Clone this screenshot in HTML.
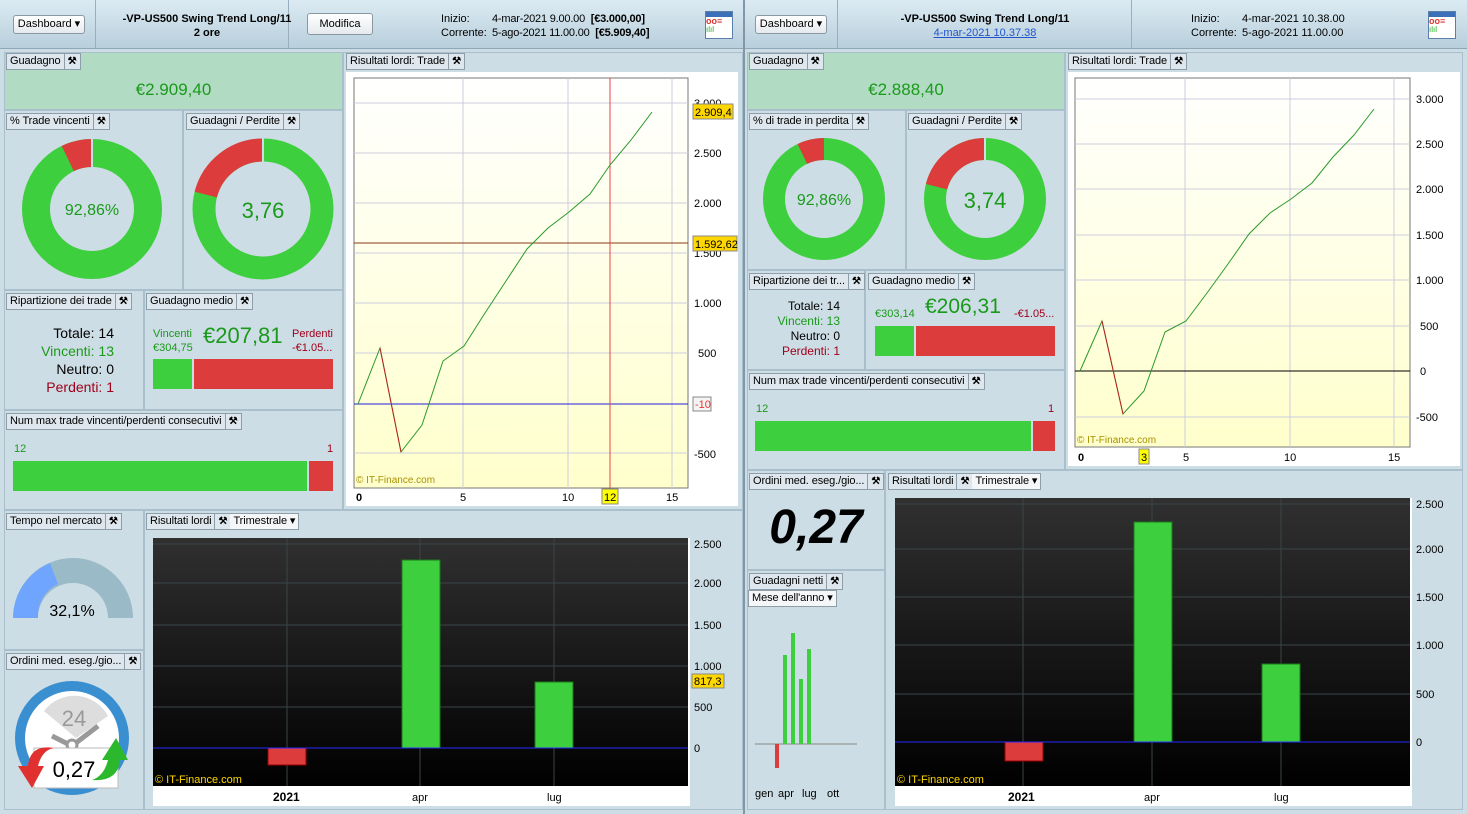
<!DOCTYPE html><html><head><meta charset="utf-8"><style>
*{box-sizing:border-box;margin:0;padding:0}
body{width:1467px;height:814px;overflow:hidden;background:#cddde5;font-family:"Liberation Sans",sans-serif;font-size:11px;color:#000;position:relative}
.a{position:absolute}
.hdr{background:linear-gradient(#dcebf3,#b8cfdc);border-bottom:1px solid #8ea8b8}
.pn{position:absolute;background:#cddde5;border:1px solid #a9bfcb}
.tab{position:absolute;height:17px;border:1px solid #8d9ea9;background:#dde7ed;display:flex;font-size:11px;line-height:15px;white-space:nowrap;letter-spacing:-0.1px}
.tab span{padding:0 3px;border-right:1px solid #8d9ea9}
.tab i{width:15px;font-style:normal;text-align:center;font-weight:bold;font-size:10px}
.dd{background:#f4f6f8;padding:0 4px}
.btn{position:absolute;border:1px solid #8a98a3;border-radius:3px;background:linear-gradient(#fff,#e6eaed);font-size:11px;text-align:center}
.g{color:#1a9a1a}.r{color:#a0001a}
svg text{font-family:"Liberation Sans",sans-serif}
</style></head><body>
<!-- LEFT HEADER -->
<div class="a hdr" style="left:0;top:0;width:743px;height:49px"></div>
<div class="a" style="left:95px;top:0;width:1px;height:49px;background:#98afbd"></div>
<div class="a" style="left:288px;top:0;width:1px;height:49px;background:#98afbd"></div>
<div class="btn" style="left:13px;top:15px;width:72px;height:19px;line-height:17px">Dashboard ▾</div>
<div class="a" style="left:112px;top:12px;width:190px;text-align:center;font-weight:bold;font-size:11px;line-height:14px">-VP-US500 Swing Trend Long/11<br>2 ore</div>
<div class="btn" style="left:307px;top:13px;width:66px;height:22px;line-height:20px">Modifica</div>
<div class="a" style="left:441px;top:12px;line-height:14px;font-size:11px">Inizio:<br>Corrente:</div>
<div class="a" style="left:492px;top:12px;line-height:14px;font-size:11px;letter-spacing:-0.2px">4-mar-2021 9.00.00 &nbsp;<b>[€3.000,00]</b><br>5-ago-2021 11.00.00 &nbsp;<b>[€5.909,40]</b></div>
<div class="a" style="left:705px;top:11px;width:28px;height:28px;background:#fff;border:1px solid #5b7fa8"><div style="height:5px;background:#3b6fb8"></div><div style="color:#d33;font-size:9px;font-weight:bold;line-height:9px">oo≡</div><div style="color:#2a2;font-size:8px;line-height:8px">ılıl</div></div>
<!-- RIGHT HEADER -->
<div class="a hdr" style="left:745px;top:0;width:722px;height:49px"></div>
<div class="a" style="left:837px;top:0;width:1px;height:49px;background:#98afbd"></div>
<div class="a" style="left:1131px;top:0;width:1px;height:49px;background:#98afbd"></div>
<div class="btn" style="left:755px;top:15px;width:72px;height:19px;line-height:17px">Dashboard ▾</div>
<div class="a" style="left:880px;top:12px;width:210px;text-align:center;font-weight:bold;font-size:11px;line-height:14px">-VP-US500 Swing Trend Long/11<br><span style="font-weight:normal;color:#2255cc;text-decoration:underline">4-mar-2021 10.37.38</span></div>
<div class="a" style="left:1191px;top:12px;line-height:14px">Inizio:<br>Corrente:</div>
<div class="a" style="left:1242px;top:12px;line-height:14px">4-mar-2021 10.38.00<br>5-ago-2021 11.00.00</div>
<div class="a" style="left:1428px;top:11px;width:28px;height:28px;background:#fff;border:1px solid #5b7fa8"><div style="height:5px;background:#3b6fb8"></div><div style="color:#d33;font-size:9px;font-weight:bold;line-height:9px">oo≡</div><div style="color:#2a2;font-size:8px;line-height:8px">ılıl</div></div>
<div class="a" style="left:743px;top:0;width:2px;height:814px;background:#7f97a6"></div>

<!-- LEFT PANELS -->
<div class="pn" style="left:4px;top:52px;width:339px;height:58px;background:#b2dbc4"></div>
<div class="tab" style="left:6px;top:53px"><span>Guadagno</span><i>⚒</i></div>
<div class="a g" style="left:4px;top:80px;width:339px;text-align:center;font-size:17px">€2.909,40</div>
<div class="pn" style="left:4px;top:110px;width:179px;height:180px"></div>
<div class="pn" style="left:183px;top:110px;width:160px;height:180px"></div>
<div class="tab" style="left:6px;top:113px"><span>% Trade vincenti</span><i>⚒</i></div>
<div class="tab" style="left:186px;top:113px"><span>Guadagni / Perdite</span><i>⚒</i></div>
<svg class="a" style="left:0;top:110px" width="345" height="180">
<circle cx="92" cy="99" r="56" fill="none" stroke="#3ecf3e" stroke-width="28"/>
<circle cx="92" cy="99" r="56" fill="none" stroke="#dd3c3c" stroke-width="28" stroke-dasharray="25.1 400" transform="rotate(-115.7 92 99)"/>
<line x1="92" y1="28" x2="92" y2="57" stroke="#cddde5" stroke-width="2"/>
<text x="92" y="105" text-anchor="middle" font-size="16" fill="#1a9a1a">92,86%</text>
<circle cx="263" cy="99" r="59" fill="none" stroke="#3ecf3e" stroke-width="23"/>
<circle cx="263" cy="99" r="59" fill="none" stroke="#dd3c3c" stroke-width="23" stroke-dasharray="78 400" transform="rotate(-165.8 263 99)"/>
<line x1="263" y1="28" x2="263" y2="52" stroke="#cddde5" stroke-width="2"/>
<text x="263" y="108" text-anchor="middle" font-size="22" fill="#1a9a1a">3,76</text>
</svg>
<div class="pn" style="left:4px;top:290px;width:140px;height:120px"></div>
<div class="pn" style="left:144px;top:290px;width:199px;height:120px"></div>
<div class="tab" style="left:6px;top:293px"><span>Ripartizione dei trade</span><i>⚒</i></div>
<div class="tab" style="left:146px;top:293px"><span>Guadagno medio</span><i>⚒</i></div>
<div class="a" style="left:8px;top:324px;width:106px;text-align:right;font-size:14px;line-height:18px">Totale: 14<br><span class="g">Vincenti: 13</span><br>Neutro: 0<br><span class="r">Perdenti: 1</span></div>
<div class="a g" style="left:153px;top:327px;font-size:11px;line-height:14px">Vincenti<br>€304,75</div>
<div class="a g" style="left:203px;top:323px;font-size:22px">€207,81</div>
<div class="a r" style="left:292px;top:327px;font-size:11px;line-height:14px">Perdenti<br>-€1.05...</div>
<div class="a" style="left:153px;top:359px;width:39px;height:30px;background:#3ecf3e"></div>
<div class="a" style="left:194px;top:359px;width:139px;height:30px;background:#dd3c3c"></div>
<div class="pn" style="left:4px;top:410px;width:339px;height:100px"></div>
<div class="tab" style="left:6px;top:413px"><span>Num max trade vincenti/perdenti consecutivi</span><i>⚒</i></div>
<div class="a g" style="left:14px;top:443px">12</div><div class="a r" style="left:327px;top:443px">1</div>
<div class="a" style="left:13px;top:461px;width:294px;height:30px;background:#3ecf3e"></div>
<div class="a" style="left:309px;top:461px;width:24px;height:30px;background:#dd3c3c"></div>

<!-- left line chart -->
<div class="pn" style="left:343px;top:52px;width:400px;height:458px"></div>
<div class="tab" style="left:346px;top:53px"><span>Risultati lordi: Trade</span><i>⚒</i></div>
<div class="a" style="left:346px;top:72px;width:392px;height:434px;background:#fff"></div>
<svg class="a" style="left:346px;top:72px" width="395" height="436">
<defs><linearGradient id="yg" x1="0" y1="0" x2="0" y2="1"><stop offset="0" stop-color="#fff"/><stop offset="1" stop-color="#ffffcc"/></linearGradient></defs>
<rect x="8" y="6" width="334" height="410" fill="url(#yg)" stroke="#777"/>
<g stroke="#ccd" stroke-width="1">
<line x1="117" y1="6" x2="117" y2="416"/><line x1="222" y1="6" x2="222" y2="416"/><line x1="326" y1="6" x2="326" y2="416"/>
<line x1="8" y1="31" x2="342" y2="31"/><line x1="8" y1="81" x2="342" y2="81"/><line x1="8" y1="131" x2="342" y2="131"/><line x1="8" y1="181" x2="342" y2="181"/><line x1="8" y1="231" x2="342" y2="231"/><line x1="8" y1="281" x2="342" y2="281"/><line x1="8" y1="381" x2="342" y2="381"/></g>
<line x1="8" y1="171" x2="342" y2="171" stroke="#8a3a1a"/>
<line x1="8" y1="332" x2="342" y2="332" stroke="#2020dd"/>
<line x1="264" y1="6" x2="264" y2="416" stroke="#f04040"/>
<polyline fill="none" stroke="#2a9a2a" points="12,332 34,276 55,380 76,353 97,289 118,274 139,241 160,209 181,177 202,156 223,140 244,122 264,93 285,68 306,40"/>
<polyline fill="none" stroke="#c02020" points="34,276 55,380"/>
<g font-size="11" fill="#000"><text x="348" y="35">3.000</text><text x="348" y="85">2.500</text><text x="348" y="135">2.000</text><text x="348" y="185">1.500</text><text x="348" y="235">1.000</text><text x="352" y="285">500</text><text x="348" y="386">-500</text>
<text x="10" y="429" font-weight="bold">0</text><text x="114" y="429">5</text><text x="216" y="429">10</text><text x="320" y="429">15</text></g>
<rect x="347" y="32" width="40" height="15" fill="#ffd700" stroke="#888"/><text x="349" y="44" font-size="11">2.909,4</text>
<rect x="347" y="164" width="44" height="15" fill="#ffd700" stroke="#888"/><text x="349" y="176" font-size="11">1.592,62</text>
<rect x="347" y="325" width="18" height="14" fill="#f4f4f4" stroke="#888"/><text x="349" y="336" font-size="11" fill="#e33">-10</text>
<rect x="256" y="417" width="16" height="15" fill="#ffff00" stroke="#888"/><text x="258" y="429" font-size="11">12</text>
<text x="10" y="411" font-size="10" fill="#a89000">© IT-Finance.com</text>
</svg>

<!-- left bottom -->
<div class="pn" style="left:4px;top:510px;width:140px;height:140px"></div>
<div class="tab" style="left:6px;top:513px"><span>Tempo nel mercato</span><i>⚒</i></div>
<svg class="a" style="left:4px;top:550px" width="140" height="80">
<path d="M9 68 A60 60 0 0 1 129 68 L104 68 A35 35 0 0 0 34 68 Z" fill="#9bbac8"/>
<path d="M9 68 A60 60 0 0 1 46 13 L54 34 A35 35 0 0 0 34 68 Z" fill="#6fa5ff"/>
<text x="68" y="66" font-size="16" text-anchor="middle">32,1%</text></svg>
<div class="pn" style="left:4px;top:650px;width:140px;height:160px"></div>
<div class="tab" style="left:6px;top:653px"><span>Ordini med. eseg./gio...</span><i>⚒</i></div>
<svg class="a" style="left:4px;top:676px" width="140" height="130">
<circle cx="68" cy="62" r="57" fill="#3a8fd0"/><circle cx="68" cy="62" r="47" fill="#fff"/>
<path d="M40 35 A38 38 0 0 1 104 40 L72 62 Z" fill="#ddd"/>
<text x="70" y="50" font-size="22" fill="#999" text-anchor="middle">24</text>
<path d="M48 60 L68 70 L94 50" stroke="#999" stroke-width="5" fill="none"/><circle cx="68" cy="69" r="5" fill="#fff" stroke="#999" stroke-width="3"/>
<rect x="30" y="72" width="84" height="40" fill="#fff" stroke="#bbb"/>
<path d="M14 90 L28 112 L40 90 L34 90 Q38 74 50 72 Q26 68 24 90Z" fill="#e03030"/>
<path d="M124 84 L112 62 L98 84 L104 84 Q100 100 88 104 Q114 106 116 84Z" fill="#2cb82c"/>
<text x="70" y="101" font-size="22" text-anchor="middle">0,27</text></svg>
<div class="pn" style="left:144px;top:510px;width:599px;height:300px"></div>
<div class="tab" style="left:146px;top:513px"><span>Risultati lordi</span><i>⚒</i><span class="dd" style="border:none">Trimestrale ▾</span></div>
<div class="a" style="left:153px;top:538px;width:537px;height:268px;background:#fff"></div>
<svg class="a" style="left:153px;top:538px" width="590" height="270">
<defs><linearGradient id="dk" x1="0" y1="0" x2="0" y2="1"><stop offset="0" stop-color="#303030"/><stop offset="1" stop-color="#000"/></linearGradient></defs>
<rect x="0" y="0" width="535" height="248" fill="url(#dk)"/>
<g stroke="#3a4448"><line x1="134" y1="0" x2="134" y2="248"/><line x1="267" y1="0" x2="267" y2="248"/><line x1="401" y1="0" x2="401" y2="248"/>
<line x1="0" y1="6" x2="535" y2="6"/><line x1="0" y1="45" x2="535" y2="45"/><line x1="0" y1="87" x2="535" y2="87"/><line x1="0" y1="128" x2="535" y2="128"/><line x1="0" y1="169" x2="535" y2="169"/></g>
<rect x="115" y="210" width="38" height="17" fill="#dd3c3c" stroke="#900"/>
<rect x="249" y="22" width="38" height="188" fill="#3ecf3e" stroke="#1a7a1a"/>
<rect x="382" y="144" width="38" height="66" fill="#3ecf3e" stroke="#1a7a1a"/>
<line x1="0" y1="210" x2="535" y2="210" stroke="#2828ff"/>
<text x="2" y="245" font-size="11" fill="#ffd700">© IT-Finance.com</text>
<g font-size="11"><text x="541" y="10">2.500</text><text x="541" y="49">2.000</text><text x="541" y="91">1.500</text><text x="541" y="132">1.000</text><text x="541" y="173">500</text><text x="541" y="214">0</text>
<text x="120" y="263" font-weight="bold" font-size="12">2021</text><text x="259" y="263">apr</text><text x="394" y="263">lug</text></g>
<rect x="539" y="136" width="32" height="14" fill="#ffd700" stroke="#888"/><text x="541" y="147" font-size="11">817,3</text>
</svg>

<!-- RIGHT PANELS -->
<div class="pn" style="left:747px;top:52px;width:318px;height:58px;background:#b2dbc4"></div>
<div class="tab" style="left:749px;top:53px"><span>Guadagno</span><i>⚒</i></div>
<div class="a g" style="left:747px;top:80px;width:318px;text-align:center;font-size:17px">€2.888,40</div>
<div class="pn" style="left:747px;top:110px;width:159px;height:160px"></div>
<div class="pn" style="left:906px;top:110px;width:159px;height:160px"></div>
<div class="tab" style="left:749px;top:113px"><span>% di trade in perdita</span><i>⚒</i></div>
<div class="tab" style="left:908px;top:113px"><span>Guadagni / Perdite</span><i>⚒</i></div>
<svg class="a" style="left:747px;top:110px" width="320" height="160">
<circle cx="77" cy="89" r="50" fill="none" stroke="#3ecf3e" stroke-width="22"/>
<circle cx="77" cy="89" r="50" fill="none" stroke="#dd3c3c" stroke-width="22" stroke-dasharray="22.4 400" transform="rotate(-115.7 77 89)"/>
<text x="77" y="95" text-anchor="middle" font-size="16" fill="#1a9a1a">92,86%</text>
<circle cx="238" cy="89" r="50" fill="none" stroke="#3ecf3e" stroke-width="22"/>
<circle cx="238" cy="89" r="50" fill="none" stroke="#dd3c3c" stroke-width="22" stroke-dasharray="66 400" transform="rotate(-165.8 238 89)"/>
<line x1="238" y1="28" x2="238" y2="50" stroke="#cddde5" stroke-width="2"/>
<text x="238" y="98" text-anchor="middle" font-size="22" fill="#1a9a1a">3,74</text>
</svg>
<div class="pn" style="left:747px;top:270px;width:118px;height:100px"></div>
<div class="pn" style="left:865px;top:270px;width:200px;height:100px"></div>
<div class="tab" style="left:749px;top:273px"><span>Ripartizione dei tr...</span><i>⚒</i></div>
<div class="tab" style="left:868px;top:273px"><span>Guadagno medio</span><i>⚒</i></div>
<div class="a" style="left:750px;top:299px;width:90px;text-align:right;font-size:12px;line-height:15px">Totale: 14<br><span class="g">Vincenti: 13</span><br>Neutro: 0<br><span class="r">Perdenti: 1</span></div>
<div class="a g" style="left:875px;top:308px;font-size:11px">€303,14</div>
<div class="a g" style="left:925px;top:295px;font-size:21px">€206,31</div>
<div class="a r" style="left:1014px;top:308px;font-size:11px">-€1.05...</div>
<div class="a" style="left:875px;top:326px;width:39px;height:30px;background:#3ecf3e"></div>
<div class="a" style="left:916px;top:326px;width:139px;height:30px;background:#dd3c3c"></div>
<div class="pn" style="left:747px;top:370px;width:318px;height:100px"></div>
<div class="tab" style="left:749px;top:373px"><span>Num max trade vincenti/perdenti consecutivi</span><i>⚒</i></div>
<div class="a g" style="left:756px;top:403px">12</div><div class="a r" style="left:1048px;top:403px">1</div>
<div class="a" style="left:755px;top:421px;width:276px;height:30px;background:#3ecf3e"></div>
<div class="a" style="left:1033px;top:421px;width:22px;height:30px;background:#dd3c3c"></div>

<div class="pn" style="left:1065px;top:52px;width:398px;height:418px"></div>
<div class="tab" style="left:1068px;top:53px"><span>Risultati lordi: Trade</span><i>⚒</i></div>
<div class="a" style="left:1068px;top:72px;width:392px;height:394px;background:#fff"></div>
<svg class="a" style="left:1068px;top:72px" width="395" height="396">
<rect x="7" y="6" width="335" height="369" fill="url(#yg)" stroke="#777"/>
<g stroke="#ccd"><line x1="117" y1="6" x2="117" y2="375"/><line x1="222" y1="6" x2="222" y2="375"/><line x1="326" y1="6" x2="326" y2="375"/>
<line x1="7" y1="27" x2="342" y2="27"/><line x1="7" y1="72" x2="342" y2="72"/><line x1="7" y1="117" x2="342" y2="117"/><line x1="7" y1="163" x2="342" y2="163"/><line x1="7" y1="208" x2="342" y2="208"/><line x1="7" y1="254" x2="342" y2="254"/><line x1="7" y1="345" x2="342" y2="345"/></g>
<line x1="7" y1="299" x2="342" y2="299" stroke="#000"/>
<polyline fill="none" stroke="#2a9a2a" points="12,299 34,249 55,342 76,319 97,260 118,249 139,221 160,192 181,162 202,141 223,127 244,111 265,85 286,63 306,37"/>
<polyline fill="none" stroke="#c02020" points="34,249 55,342"/>
<g font-size="11"><text x="348" y="31">3.000</text><text x="348" y="76">2.500</text><text x="348" y="121">2.000</text><text x="348" y="167">1.500</text><text x="348" y="212">1.000</text><text x="352" y="258">500</text><text x="352" y="303">0</text><text x="348" y="349">-500</text>
<text x="10" y="389" font-weight="bold">0</text><text x="115" y="389">5</text><text x="216" y="389">10</text><text x="320" y="389">15</text></g>
<rect x="71" y="377" width="10" height="15" fill="#ffff00" stroke="#888"/><text x="73" y="389" font-size="11">3</text>
<text x="9" y="371" font-size="10" fill="#a89000">© IT-Finance.com</text>
</svg>

<div class="pn" style="left:747px;top:470px;width:138px;height:100px"></div>
<div class="tab" style="left:749px;top:473px"><span>Ordini med. eseg./gio...</span><i>⚒</i></div>
<div class="a" style="left:747px;top:500px;width:138px;text-align:center;font-size:48px;font-weight:bold;font-style:italic">0,27</div>
<div class="pn" style="left:747px;top:570px;width:138px;height:240px"></div>
<div class="tab" style="left:749px;top:573px"><span>Guadagni netti</span><i>⚒</i></div>
<div class="tab" style="left:748px;top:590px"><span class="dd" style="border:none">Mese dell'anno ▾</span></div>
<svg class="a" style="left:747px;top:620px" width="138" height="185">
<line x1="8" y1="124" x2="110" y2="124" stroke="#888"/>
<rect x="28" y="124" width="4" height="24" fill="#dd3c3c"/>
<rect x="36" y="35" width="4" height="89" fill="#3ecf3e"/><rect x="44" y="13" width="4" height="111" fill="#3ecf3e"/><rect x="52" y="59" width="4" height="65" fill="#3ecf3e"/><rect x="60" y="29" width="4" height="95" fill="#3ecf3e"/>
<g font-size="11"><text x="8" y="177">gen</text><text x="31" y="177">apr</text><text x="55" y="177">lug</text><text x="80" y="177">ott</text></g></svg>
<div class="pn" style="left:885px;top:470px;width:578px;height:340px"></div>
<div class="tab" style="left:888px;top:473px"><span>Risultati lordi</span><i>⚒</i><span class="dd" style="border:none">Trimestrale ▾</span></div>
<div class="a" style="left:895px;top:498px;width:517px;height:308px;background:#fff"></div>
<svg class="a" style="left:895px;top:498px" width="570" height="310">
<rect x="0" y="0" width="515" height="288" fill="url(#dk)"/>
<g stroke="#3a4448"><line x1="128" y1="0" x2="128" y2="288"/><line x1="257" y1="0" x2="257" y2="288"/><line x1="386" y1="0" x2="386" y2="288"/>
<line x1="0" y1="6" x2="515" y2="6"/><line x1="0" y1="51" x2="515" y2="51"/><line x1="0" y1="99" x2="515" y2="99"/><line x1="0" y1="147" x2="515" y2="147"/><line x1="0" y1="196" x2="515" y2="196"/></g>
<rect x="110" y="244" width="38" height="19" fill="#dd3c3c" stroke="#900"/>
<rect x="239" y="24" width="38" height="220" fill="#3ecf3e" stroke="#1a7a1a"/>
<rect x="367" y="166" width="38" height="78" fill="#3ecf3e" stroke="#1a7a1a"/>
<line x1="0" y1="244" x2="515" y2="244" stroke="#2828ff"/>
<text x="2" y="285" font-size="11" fill="#ffd700">© IT-Finance.com</text>
<g font-size="11"><text x="521" y="10">2.500</text><text x="521" y="55">2.000</text><text x="521" y="103">1.500</text><text x="521" y="151">1.000</text><text x="521" y="200">500</text><text x="521" y="248">0</text>
<text x="113" y="303" font-weight="bold" font-size="12">2021</text><text x="249" y="303">apr</text><text x="379" y="303">lug</text></g>
</svg>
</body></html>
